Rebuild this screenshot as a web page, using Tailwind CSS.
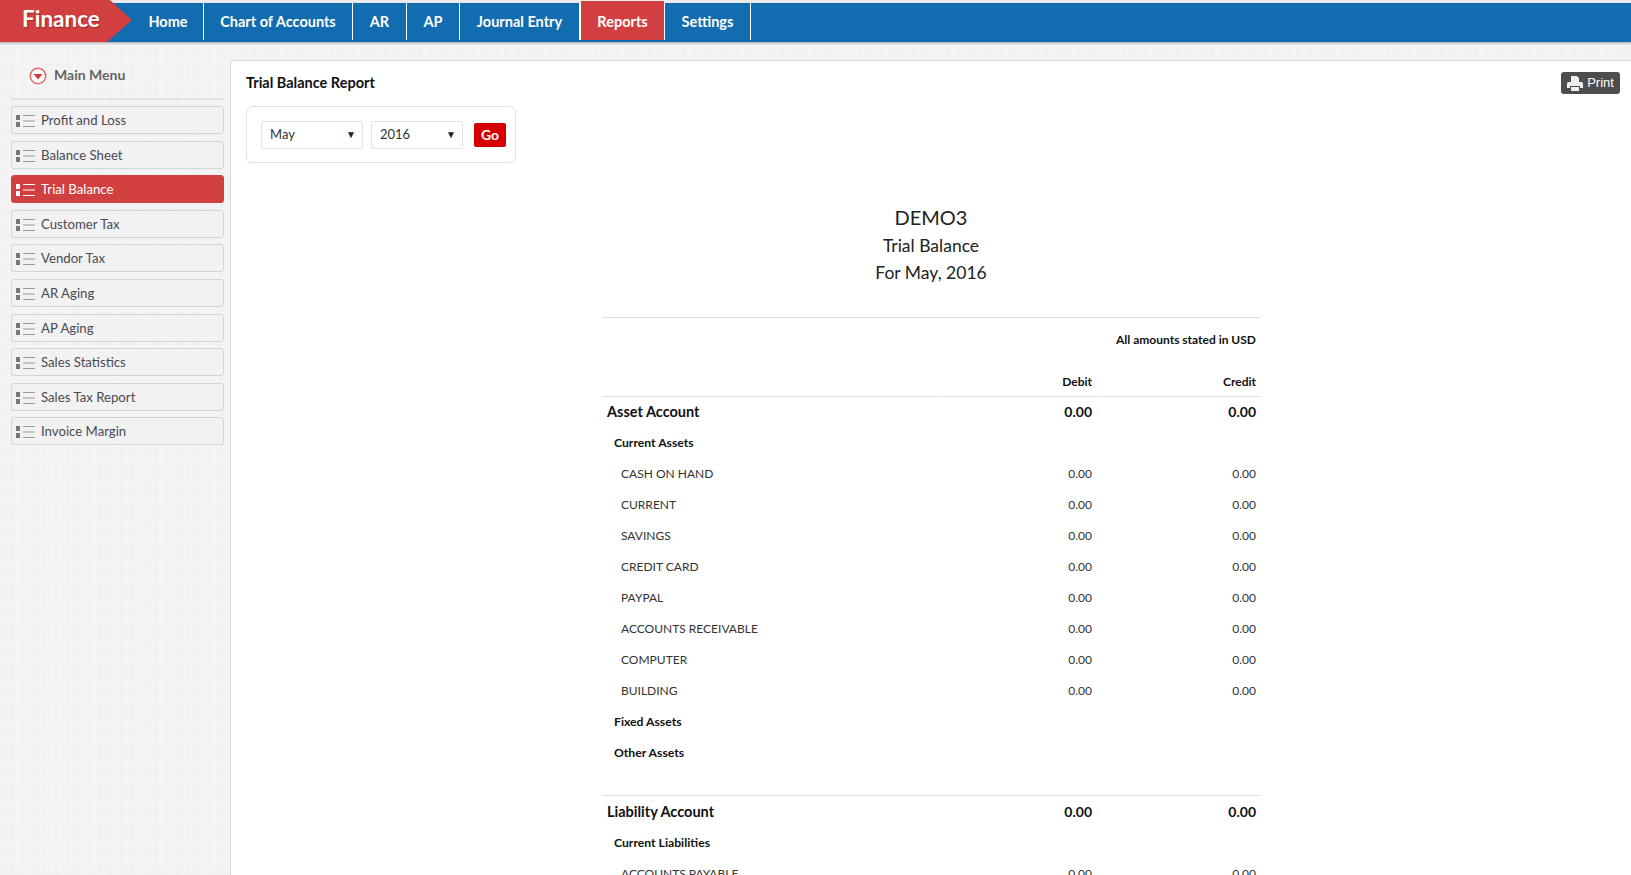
<!DOCTYPE html>
<html lang="en">
<head>
    <meta charset="UTF-8">
    <meta name="viewport" content="width=device-width, initial-scale=1.0">
    <title>Finance</title>
    <script src="https://cdn.jsdelivr.net/npm/@tailwindcss/browser@4"></script>
</head>
<body class="h-screen overflow-hidden flex flex-col bg-[#f4f4f4] font-['Lato','Open_Sans',sans-serif] text-[#222]">

<!-- Navbar -->
<nav class="relative z-10 h-[45px] shrink-0 bg-[#ececec] pt-[3px]">
    <div class="h-[39px] bg-[#126cb0] flex pl-[133px] shadow-[0_1px_2px_rgba(0,0,0,0.3)] text-white font-bold text-[14.5px]">
        <a href="#" class="h-[37px] pt-[1px] w-[71px] flex items-center justify-center border-r border-white">Home</a>
        <a href="#" class="h-[37px] pt-[1px] w-[149px] flex items-center justify-center border-r border-white">Chart of Accounts</a>
        <a href="#" class="h-[37px] pt-[1px] w-[54px] flex items-center justify-center border-r border-white">AR</a>
        <a href="#" class="h-[37px] pt-[1px] w-[53px] flex items-center justify-center border-r border-white">AP</a>
        <a href="#" class="h-[37px] pt-[1px] w-[120px] flex items-center justify-center border-r border-white">Journal Entry</a>
        <a href="#" class="h-[39px] -mt-[2px] pt-[3px] w-[85px] flex items-center justify-center bg-[#d23f41] border-l border-r border-white">Reports</a>
        <a href="#" class="h-[37px] pt-[1px] w-[86px] flex items-center justify-center border-r border-white">Settings</a>
    </div>
    <!-- Logo -->
    <div class="absolute left-0 top-0 h-[42px] w-[132px] bg-[#d23f41] [clip-path:polygon(0_0,110px_0,132px_20px,107px_42px,0_42px)] flex items-center pl-[22px] pb-[4px] text-white font-bold text-[22.5px] [text-shadow:1px_1px_1px_rgba(90,0,0,0.4)]">Finance</div>
</nav>

<div class="flex flex-1 min-h-0 pt-[15px] bg-[repeating-linear-gradient(0deg,rgba(0,0,0,0.007)_0,rgba(0,0,0,0.007)_1px,transparent_1px,transparent_5px),repeating-linear-gradient(90deg,rgba(0,0,0,0.007)_0,rgba(0,0,0,0.007)_1px,transparent_1px,transparent_3px),repeating-linear-gradient(90deg,rgba(0,0,0,0.008)_0,rgba(0,0,0,0.008)_2px,transparent_2px,transparent_11px)]">
    <!-- Sidebar -->
    <aside class="w-[230px] shrink-0 pl-[11px] pr-[6px]">
        <div class="h-[40px] border-b-2 border-[#e2e2e2] flex items-center pl-[18px] pb-[9px] gap-[7px] text-[14px] font-bold text-[#666]">
            <svg class="w-[18px] h-[18px] mt-[2px]" viewBox="0 0 18 18">
                <circle cx="9" cy="9" r="7.7" fill="#fff" stroke="#e0686a" stroke-width="1.5"/>
                <path d="M4.5 7h9L9 12.500z" fill="#d23f41"/>
            </svg>
            Main Menu
        </div>
        <ul class="mt-[6px] flex flex-col gap-[6.6px] text-[13.2px] text-[#4a4a55]">
            <li class="h-[28px] flex items-center gap-[6px] pl-[4px] pt-[2px] bg-[#f2f2f2] border border-[#d4d4d4] rounded-[3px]">
                <svg class="w-[19px] h-[14px]" viewBox="0 0 19 14"><path d="M0 1h4v5H0zM0 8h4v5H0z" fill="#777"/><path d="M7 1.500h12M7 7h12M7 12.500h12" stroke="#999"/></svg>
                Profit and Loss
            </li>
            <li class="h-[28px] flex items-center gap-[6px] pl-[4px] pt-[2px] bg-[#f2f2f2] border border-[#d4d4d4] rounded-[3px]">
                <svg class="w-[19px] h-[14px]" viewBox="0 0 19 14"><path d="M0 1h4v5H0zM0 8h4v5H0z" fill="#777"/><path d="M7 1.500h12M7 7h12M7 12.500h12" stroke="#999"/></svg>
                Balance Sheet
            </li>
            <li class="h-[28px] flex items-center gap-[6px] pl-[4px] pt-[2px] bg-[#d23f41] border border-[#d23f41] rounded-[3px] text-white">
                <svg class="w-[19px] h-[14px]" viewBox="0 0 19 14"><path d="M0 1h4v5H0zM0 8h4v5H0z" fill="#fff"/><path d="M7 1.500h12M7 7h12M7 12.500h12" stroke="#fff"/></svg>
                Trial Balance
            </li>
            <li class="h-[28px] flex items-center gap-[6px] pl-[4px] pt-[2px] bg-[#f2f2f2] border border-[#d4d4d4] rounded-[3px]">
                <svg class="w-[19px] h-[14px]" viewBox="0 0 19 14"><path d="M0 1h4v5H0zM0 8h4v5H0z" fill="#777"/><path d="M7 1.500h12M7 7h12M7 12.500h12" stroke="#999"/></svg>
                Customer Tax
            </li>
            <li class="h-[28px] flex items-center gap-[6px] pl-[4px] pt-[2px] bg-[#f2f2f2] border border-[#d4d4d4] rounded-[3px]">
                <svg class="w-[19px] h-[14px]" viewBox="0 0 19 14"><path d="M0 1h4v5H0zM0 8h4v5H0z" fill="#777"/><path d="M7 1.500h12M7 7h12M7 12.500h12" stroke="#999"/></svg>
                Vendor Tax
            </li>
            <li class="h-[28px] flex items-center gap-[6px] pl-[4px] pt-[2px] bg-[#f2f2f2] border border-[#d4d4d4] rounded-[3px]">
                <svg class="w-[19px] h-[14px]" viewBox="0 0 19 14"><path d="M0 1h4v5H0zM0 8h4v5H0z" fill="#777"/><path d="M7 1.500h12M7 7h12M7 12.500h12" stroke="#999"/></svg>
                AR Aging
            </li>
            <li class="h-[28px] flex items-center gap-[6px] pl-[4px] pt-[2px] bg-[#f2f2f2] border border-[#d4d4d4] rounded-[3px]">
                <svg class="w-[19px] h-[14px]" viewBox="0 0 19 14"><path d="M0 1h4v5H0zM0 8h4v5H0z" fill="#777"/><path d="M7 1.500h12M7 7h12M7 12.500h12" stroke="#999"/></svg>
                AP Aging
            </li>
            <li class="h-[28px] flex items-center gap-[6px] pl-[4px] pt-[2px] bg-[#f2f2f2] border border-[#d4d4d4] rounded-[3px]">
                <svg class="w-[19px] h-[14px]" viewBox="0 0 19 14"><path d="M0 1h4v5H0zM0 8h4v5H0z" fill="#777"/><path d="M7 1.500h12M7 7h12M7 12.500h12" stroke="#999"/></svg>
                Sales Statistics
            </li>
            <li class="h-[28px] flex items-center gap-[6px] pl-[4px] pt-[2px] bg-[#f2f2f2] border border-[#d4d4d4] rounded-[3px]">
                <svg class="w-[19px] h-[14px]" viewBox="0 0 19 14"><path d="M0 1h4v5H0zM0 8h4v5H0z" fill="#777"/><path d="M7 1.500h12M7 7h12M7 12.500h12" stroke="#999"/></svg>
                Sales Tax Report
            </li>
            <li class="h-[28px] flex items-center gap-[6px] pl-[4px] pt-[2px] bg-[#f2f2f2] border border-[#d4d4d4] rounded-[3px]">
                <svg class="w-[19px] h-[14px]" viewBox="0 0 19 14"><path d="M0 1h4v5H0zM0 8h4v5H0z" fill="#777"/><path d="M7 1.500h12M7 7h12M7 12.500h12" stroke="#999"/></svg>
                Invoice Margin
            </li>
        </ul>
    </aside>

    <!-- Main -->
    <main class="flex-1 min-w-0 bg-white border-l border-t border-[#d6d6d6] pl-[15px] pr-[11px] overflow-hidden">
        <div class="flex justify-between h-[45px]">
            <h1 class="text-[14.5px] font-bold text-[#111] pt-[12px] leading-[20px]">Trial Balance Report</h1>
            <a href="#" class="mt-[11px] h-[22px] w-[59px] rounded-[3px] bg-[#4d4d4d] text-white text-[13px] flex items-center justify-center gap-[4px] font-['Liberation_Sans',sans-serif]">
                <svg class="w-[16px] h-[15px]" viewBox="0 0 16 15" fill="#eee"><path d="M4 0h6l2 2v4H4zM1.500 6h13A1.500 1.500 0 0 1 16 7.500V12h-3v-2H3v2H0V7.500A1.500 1.500 0 0 1 1.500 6zM4 11h8v4H4z"/></svg>
                Print
            </a>
        </div>

        <!-- Filter -->
        <div class="w-[270px] h-[57px] border border-[#dfe3e8] rounded-[6px] flex items-center pl-[14px] text-[13px]">
            <div class="w-[102px] h-[28px] border border-[#dfe3e8] rounded-[2px] flex items-center justify-between pl-[8px] pr-[6px] text-[#333]">May <span class="text-[10px] text-[#222]">▼</span></div>
            <div class="w-[92px] h-[28px] ml-[8px] border border-[#dfe3e8] rounded-[2px] flex items-center justify-between pl-[8px] pr-[6px] text-[#333]">2016 <span class="text-[10px] text-[#222]">▼</span></div>
            <button class="w-[32px] h-[24px] ml-[11px] bg-[#d40000] rounded-[2px] text-white font-bold text-[14px]">Go</button>
        </div>

        <!-- Report -->
        <div class="ml-[356px] w-[658px]">
            <div class="mt-[39px] text-center text-[#222]">
                <div class="text-[20px] leading-[30px]">DEMO3</div>
                <div class="text-[17.5px] leading-[27px]">Trial Balance</div>
                <div class="text-[17.5px] leading-[27px]">For May, 2016</div>
            </div>
            <div class="mt-[31px] border-t border-[#ddd] h-[45px] flex items-center justify-end pr-[4px] text-[12px] font-bold text-[#111]">All amounts stated in USD</div>

            <div class="grid grid-cols-[340px_156px_162px] text-[12px] text-[#333] [&>div]:h-[31px] [&>div]:flex [&>div]:items-center">
                <div class="border-b border-[#ddd] !h-[35px] mr-[2px] pt-[6px]"></div>
                <div class="border-b border-[#ddd] !h-[35px] mr-[1px] justify-end pr-[5px] font-bold text-[#111] pt-[6px]">Debit</div>
                <div class="border-b border-[#ddd] !h-[35px] justify-end pr-[4px] font-bold text-[#111] pt-[6px]">Credit</div>

                <div class="pl-[5px] !h-[30px] text-[14.5px] font-bold text-[#111]">Asset Account</div>
                <div class="justify-end !h-[30px] pr-[6px] pb-[2px] text-[14px] font-bold text-[#111]">0.00</div>
                <div class="justify-end !h-[30px] pr-[4px] pb-[2px] text-[14px] font-bold text-[#111]">0.00</div>

                <div class="pl-[12px] pt-[2px] font-bold text-[12.2px] text-[#111]">Current Assets</div><div></div><div></div>

                <div class="pl-[19px]">CASH ON HAND</div><div class="justify-end pr-[6px]">0.00</div><div class="justify-end pr-[4px]">0.00</div>
                <div class="pl-[19px]">CURRENT</div><div class="justify-end pr-[6px]">0.00</div><div class="justify-end pr-[4px]">0.00</div>
                <div class="pl-[19px]">SAVINGS</div><div class="justify-end pr-[6px]">0.00</div><div class="justify-end pr-[4px]">0.00</div>
                <div class="pl-[19px]">CREDIT CARD</div><div class="justify-end pr-[6px]">0.00</div><div class="justify-end pr-[4px]">0.00</div>
                <div class="pl-[19px]">PAYPAL</div><div class="justify-end pr-[6px]">0.00</div><div class="justify-end pr-[4px]">0.00</div>
                <div class="pl-[19px]">ACCOUNTS RECEIVABLE</div><div class="justify-end pr-[6px]">0.00</div><div class="justify-end pr-[4px]">0.00</div>
                <div class="pl-[19px]">COMPUTER</div><div class="justify-end pr-[6px]">0.00</div><div class="justify-end pr-[4px]">0.00</div>
                <div class="pl-[19px]">BUILDING</div><div class="justify-end pr-[6px]">0.00</div><div class="justify-end pr-[4px]">0.00</div>

                <div class="pl-[12px] pt-[2px] font-bold text-[12.2px] text-[#111]">Fixed Assets</div><div></div><div></div>
                <div class="pl-[12px] pt-[2px] font-bold text-[12.2px] text-[#111]">Other Assets</div><div></div><div></div>

                <div class="!h-[28px] col-span-3 border-b border-[#ddd]"></div>

                <div class="pl-[5px] text-[14.5px] font-bold text-[#111]">Liability Account</div>
                <div class="justify-end pr-[6px] text-[14px] font-bold text-[#111]">0.00</div>
                <div class="justify-end pr-[4px] text-[14px] font-bold text-[#111]">0.00</div>

                <div class="pl-[12px] pt-[2px] font-bold text-[12.2px] text-[#111]">Current Liabilities</div><div></div><div></div>

                <div class="pl-[19px]">ACCOUNTS PAYABLE</div><div class="justify-end pr-[6px]">0.00</div><div class="justify-end pr-[4px]">0.00</div>
            </div>
        </div>
    </main>
</div>

</body>
</html>
